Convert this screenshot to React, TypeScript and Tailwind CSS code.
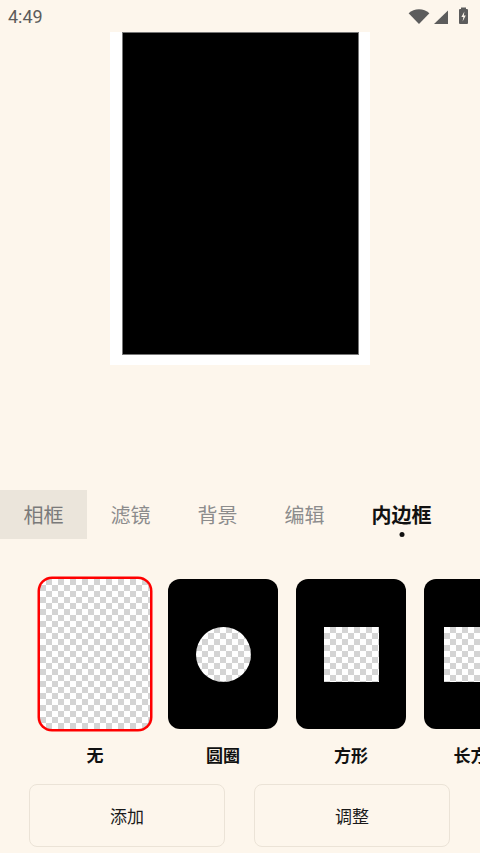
import React from "react";

const checker =
  "bg-white bg-[conic-gradient(#d4d4d4_25%,#ffffff_0_50%,#d4d4d4_0_75%,#ffffff_0)] bg-size-[12px_12px]";

function StatusBar() {
  return (
    <div className="h-[32px] flex items-center justify-between pl-[8px] pr-[9px] shrink-0">
      <span className="text-[18px] text-[#5c5c5c] font-['Roboto',sans-serif] leading-none mt-[1px]">4:49</span>
      <div className="flex items-center gap-[2px]">
        <svg width="22" height="16" viewBox="0 0 22 16" className="mt-[2px]">
          <path d="M11 15 L0.6 4.2 A15.5 15.5 0 0 1 21.4 4.2 Z" fill="#5c5c5c" />
        </svg>
        <svg width="17" height="16" viewBox="0 0 17 16" className="mt-[2px]">
          <path d="M16 1.5 L16 15 L2 15 Z" fill="#5c5c5c" />
        </svg>
        <svg width="14" height="18" viewBox="0 0 14 18" className="ml-[6px]">
          <rect x="4" y="0.5" width="5" height="2" fill="#5c5c5c" />
          <rect x="2" y="2" width="9" height="15" rx="1" fill="#5c5c5c" />
          <path d="M7.4 4.5 L4.4 10 L6.4 10 L5.6 14.5 L8.8 8.5 L6.8 8.5 Z" fill="#fdf6ec" />
        </svg>
      </div>
    </div>
  );
}

function Tabs() {
  const tabs = ["相框", "滤镜", "背景", "编辑", "内边框"];
  return (
    <div className="h-[49px] flex items-stretch shrink-0">
      {tabs.map((t, i) => (
        <div
          key={t}
          className={
            "relative flex items-center px-[23.5px] text-[20px] leading-none " +
            (i === 0 ? "bg-[#ebe5db] text-[#7a7a7a] " : "") +
            (i === 4 ? "text-[#111111] font-bold " : "") +
            (i > 0 && i < 4 ? "text-[#8c8c8c] " : "")
          }
        >
          {t}
          {i === 4 && (
            <span className="absolute left-1/2 -translate-x-1/2 bottom-[2px] w-[5px] h-[5px] rounded-full bg-[#111111]" />
          )}
        </div>
      ))}
    </div>
  );
}

function Card({ kind }: { kind: "none" | "circle" | "square" | "rect" }) {
  if (kind === "none") {
    return <div className={"w-[110px] h-[150px] rounded-[12px] ring-[2.5px] ring-[#ff0000] " + checker} />;
  }
  return (
    <div className="w-[110px] h-[150px] rounded-[12px] bg-black flex items-center justify-center">
      {kind === "circle" && <div className={"w-[55px] h-[55px] rounded-full " + checker} />}
      {kind === "square" && <div className={"w-[55px] h-[55px] " + checker} />}
      {kind === "rect" && <div className={"w-[70px] h-[55px] " + checker} />}
    </div>
  );
}

export default function App() {
  const items: { kind: "none" | "circle" | "square" | "rect"; label: string }[] = [
    { kind: "none", label: "无" },
    { kind: "circle", label: "圆圈" },
    { kind: "square", label: "方形" },
    { kind: "rect", label: "长方形" },
  ];
  return (
    <div className="w-[480px] h-[853px] bg-[#fdf6ec] flex flex-col overflow-hidden font-['Noto_Sans_CJK_SC','Noto_Sans',sans-serif]">
      <StatusBar />
      <div className="flex justify-center shrink-0">
        <div className="w-[260px] h-[333px] bg-white pl-[12px] pr-[11px] pb-[10px]">
          <div className="w-full h-full bg-black border border-[#777777]" />
        </div>
      </div>
      <div className="h-[125px] shrink-0" />
      <Tabs />
      <div className="mt-[40px] flex gap-[18px] pl-[40px] shrink-0">
        {items.map((it) => (
          <div key={it.label} className="flex flex-col items-center w-[110px] shrink-0">
            <Card kind={it.kind} />
            <div className="mt-[14px] h-[24px] text-[17px] leading-[24px] font-bold text-[#111111] whitespace-nowrap">
              {it.label}
            </div>
          </div>
        ))}
      </div>
      <div className="mt-[17px] flex gap-[29px] px-[29px] shrink-0">
        {["添加", "调整"].map((b) => (
          <div
            key={b}
            className="w-[196px] h-[63px] rounded-[8px] border border-[#ebe3d7] flex items-center justify-center text-[17px] text-[#1a1a1a]"
          >
            {b}
          </div>
        ))}
      </div>
    </div>
  );
}
